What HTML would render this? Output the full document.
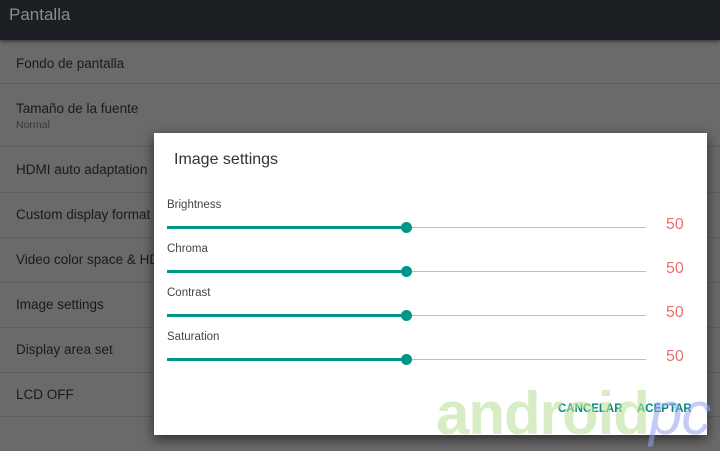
<!DOCTYPE html>
<html><head><style>
body{margin:0;width:720px;height:451px;overflow:hidden;background:#6a6a6a;font-family:"Liberation Sans",sans-serif;position:relative}
.top{position:absolute;left:0;top:0;width:720px;height:40px;background:#1b1e22;box-shadow:0 2px 3px rgba(0,0,0,.4)}
.top span{position:absolute;left:9px;top:5px;font-size:17px;color:#8a8c8e}
.it{position:absolute;left:16px;font-size:13.5px;color:#1a1a1a}
.dv{position:absolute;left:0;width:720px;height:1px;background:#5e5e5e}
.dlg{position:absolute;left:154px;top:133px;width:553px;height:302px;background:#fff;box-shadow:0 4px 12px rgba(0,0,0,.6)}
.lb{position:absolute;left:13px;font-size:11.5px;color:#444}
.tr{position:absolute;left:13px;width:479px;height:1px;background:#bdbdbd}
.tr i{position:absolute;left:0;top:-1px;width:239px;height:3px;background:#009688}
.tr b{position:absolute;left:234px;top:-5px;width:11px;height:11px;border-radius:50%;background:#009688}
.v{position:absolute;left:512px;font-size:16px;color:#e57373}
.btn{position:absolute;top:270px;font-size:11.5px;color:#00897b;font-weight:bold}
.wm{position:absolute;left:436px;top:384px;font-size:60px;font-weight:bold;color:rgba(190,225,160,.6);letter-spacing:-1px;line-height:1}
.wm span{color:rgba(150,160,240,.55);font-weight:normal;font-style:italic}
</style></head><body>
<div class="top"><span>Pantalla</span></div>
<div class="it" style="top:56px">Fondo de pantalla</div><div class="dv" style="top:83px"></div>
<div class="it" style="top:101px">Tamaño de la fuente</div><div class="it" style="top:119px;font-size:10.5px;color:#3a3a3a">Normal</div><div class="dv" style="top:146px"></div>
<div class="it" style="top:162px">HDMI auto adaptation</div><div class="dv" style="top:192px"></div>
<div class="it" style="top:207px">Custom display format</div><div class="dv" style="top:237px"></div>
<div class="it" style="top:252px">Video color space &amp; HDR</div><div class="dv" style="top:282px"></div>
<div class="it" style="top:297px">Image settings</div><div class="dv" style="top:327px"></div>
<div class="it" style="top:342px">Display area set</div><div class="dv" style="top:372px"></div>
<div class="it" style="top:387px">LCD OFF</div><div class="dv" style="top:416px"></div>
<div class="dlg">
<div style="position:absolute;left:20px;top:18px;font-size:16px;color:#333">Image settings</div>
<div class="lb" style="top:66px">Brightness</div><div class="tr" style="top:94px"><i></i><b></b></div><div class="v" style="top:83px">50</div>
<div class="lb" style="top:110px">Chroma</div><div class="tr" style="top:138px"><i></i><b></b></div><div class="v" style="top:127px">50</div>
<div class="lb" style="top:154px">Contrast</div><div class="tr" style="top:182px"><i></i><b></b></div><div class="v" style="top:171px">50</div>
<div class="lb" style="top:198px">Saturation</div><div class="tr" style="top:226px"><i></i><b></b></div><div class="v" style="top:215px">50</div>
<div class="btn" style="left:404px">CANCELAR</div>
<div class="btn" style="left:483px">ACEPTAR</div>
</div>
<div class="wm">android<span>pc</span></div>
</body></html>
